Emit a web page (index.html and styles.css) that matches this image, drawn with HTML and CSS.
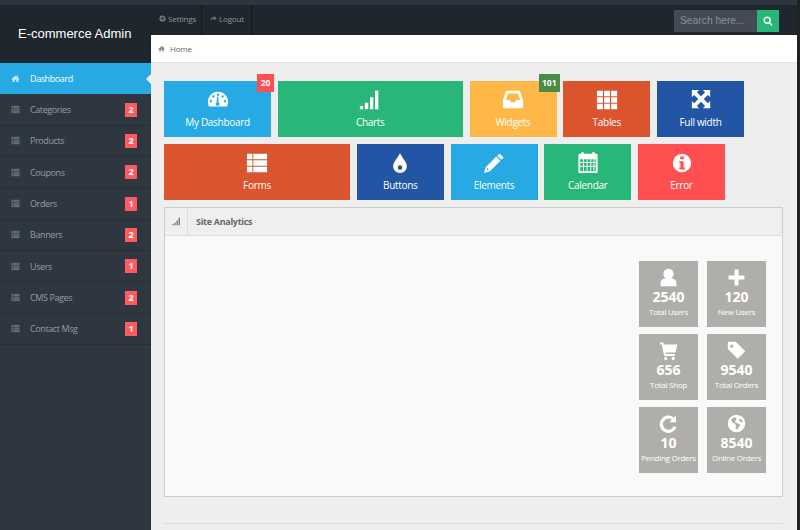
FILE: index.html
```html
<!DOCTYPE html>
<html lang="en">
<head>
  <meta charset="UTF-8">
  <meta name="viewport" content="width=device-width, initial-scale=1.0">
  <title>E-commerce Admin</title>
  <link rel="stylesheet" href="styles.css">
</head>
<body>
  <svg class="defs" aria-hidden="true">
    <symbol id="i-home" viewBox="0 0 24 24"><path d="M12 4 1 13.500l1.500 1.600L4 14v7h6v-6h4v6h6v-7l1.500 1.100 1.500-1.600L19 10V4h-3v3.400z"/></symbol>
    <symbol id="i-list" viewBox="0 0 24 24"><path d="M1 2h6v6H1zM8 2h15v6H8zM1 9h6v6H1zM8 9h15v6H8zM1 16h6v6H1zM8 16h15v6H8z"/></symbol>
    <symbol id="i-gauge" viewBox="0 0 24 24"><path fill-rule="evenodd" d="M12 3C5.400 3 1 8.400 1 14c0 2 .5 3.700 1.200 5h19.600c.7-1.300 1.200-3 1.200-5 0-5.600-4.400-11-11-11zM12 5a1.300 1.300 0 1 1 0 2.600A1.300 1.300 0 0 1 12 5zM7 6.800a1.300 1.300 0 1 1 0 2.600 1.300 1.300 0 0 1 0-2.600zM17 6.800a1.300 1.300 0 1 1 0 2.600 1.300 1.300 0 0 1 0-2.600zM4.300 12a1.300 1.300 0 1 1 0 2.600 1.300 1.300 0 0 1 0-2.600zM19.700 12a1.300 1.300 0 1 1 0 2.600 1.300 1.300 0 0 1 0-2.600zM10.900 8.500h1.300l.5 6.200a2 2 0 1 1-2.200 0z"/></symbol>
    <symbol id="i-signal" viewBox="0 0 24 24"><path d="M1 18.500h3.600V22H1zM6.500 15h3.600v7H6.500zM12 9h3.600v13H12zM17.500 2h3.600v20h-3.600z"/></symbol>
    <symbol id="i-inbox" viewBox="0 0 24 24"><path fill-rule="evenodd" d="M6 2h12a2 2 0 0 1 1.900 1.300L23 12v7a2 2 0 0 1-2 2H3a2 2 0 0 1-2-2v-7l3.100-8.700A2 2 0 0 1 6 2zM6.500 5 4.200 12h4.300l1.300 2.500h4.400l1.300-2.500h4.300L17.500 5z"/></symbol>
    <symbol id="i-grid" viewBox="0 0 24 24"><path d="M1 2h6.500v6H1zM8.800 2h6.400v6H8.800zM16.500 2H23v6h-6.500zM1 9h6.500v6H1zM8.800 9h6.400v6H8.800zM16.500 9H23v6h-6.500zM1 16h6.500v6H1zM8.800 16h6.400v6H8.800zM16.500 16H23v6h-6.500z"/></symbol>
    <symbol id="i-full" viewBox="0 0 24 24"><path d="M2 1h8L7.500 3.500 12 8l4.500-4.500L14 1h8v8l-2.500-2.500L15 11l4.500 4.500L22 13v8h-8l2.500-2.500L12 14l-4.500 4.500L10 21H2v-8l2.500 2.500L9 11 4.500 6.500 2 9z"/></symbol>
    <symbol id="i-drop" viewBox="0 0 24 24"><path fill-rule="evenodd" d="M12 1c1 3.500 7.500 9.500 7.500 14.500a7.500 7.500 0 0 1-15 0C4.500 10.500 11 4.500 12 1zM12 14.500a2.500 2.500 0 1 0 0 5 2.500 2.500 0 0 0 0-5z"/></symbol>
    <symbol id="i-pencil" viewBox="0 0 24 24"><path fill-rule="evenodd" d="M18 1.500 22.500 6 20 8.500 15.500 4zM14.500 5 19 9.500 7.500 21 1 23l2-6.500zM4.500 17.500 3.800 20.200 6.500 19.500z"/></symbol>
    <symbol id="i-cal" viewBox="0 0 24 24"><path fill-rule="evenodd" d="M6 0a1.500 1.500 0 0 1 1.500 1.500V2h9v-.5a1.500 1.500 0 0 1 3 0V2H21a1.500 1.500 0 0 1 1.500 1.500v18A1.500 1.500 0 0 1 21 23H3a1.500 1.500 0 0 1-1.500-1.500v-18A1.500 1.500 0 0 1 3 2h1.500v-.5A1.500 1.500 0 0 1 6 0zM3.500 8v3h3V8zM7.500 8v3h3V8zM11.500 8v3h3V8zM15.500 8v3h2.500V8zM19 8v3h1.500V8zM3.500 12v3h3v-3zM7.500 12v3h3v-3zM11.500 12v3h3v-3zM15.500 12v3h2.500v-3zM19 12v3h1.500v-3zM3.500 16v5h3v-5zM7.500 16v5h3v-5zM11.500 16v5h3v-5zM15.500 16v5h2.500v-5zM19 16v5h1.500v-5z"/></symbol>
    <symbol id="i-info" viewBox="0 0 24 24"><path fill-rule="evenodd" d="M12 2a10 10 0 1 1 0 20 10 10 0 0 1 0-20zM10 5v3h4V5zM9 10v2h1.300v5H9v2h6v-2h-1.300v-7z"/></symbol>
    <symbol id="i-user" viewBox="0 0 24 24"><path d="M12 1a6.500 6.500 0 0 1 6.500 6.500c0 2.500-1.300 4.500-3 5.500 4 .7 6.500 2.500 6.500 5.500V23H2v-4.500c0-3 2.500-4.800 6.500-5.500-1.700-1-3-3-3-5.500A6.500 6.500 0 0 1 12 1z"/></symbol>
    <symbol id="i-plus" viewBox="0 0 24 24"><path d="M9.500 2h5v7.500H22v5h-7.500V22h-5v-7.500H2v-5h7.500z"/></symbol>
    <symbol id="i-cart" viewBox="0 0 24 24"><path d="M1 2h4.500l.7 2.500H23l-2 10H8.500l.4 2H20v2.500H6.500L3.500 4.500H1zM8.500 20a2 2 0 1 1 0 4 2 2 0 0 1 0-4zM18 20a2 2 0 1 1 0 4 2 2 0 0 1 0-4z"/></symbol>
    <symbol id="i-tag" viewBox="0 0 24 24"><path fill-rule="evenodd" d="M2 1h9l12 12-9.500 9.500L1 10V2zM6 4.500a2 2 0 1 0 0 4 2 2 0 0 0 0-4z"/></symbol>
    <symbol id="i-refresh" viewBox="0 0 24 24"><path d="M21.500 2v8.500H13l3.300-3.300A7 7 0 1 0 18.700 15l3.500 1.700A11 11 0 1 1 19 4.500z"/></symbol>
    <symbol id="i-globe" viewBox="0 0 24 24"><path fill-rule="evenodd" d="M12 1a11 11 0 1 1 0 22 11 11 0 0 1 0-22zM7 5 5 8l2 3 3 1 1.500 3-1 3 2.500 2 2-4 2-2-3-2-3-1-1-2 2-2-1-3zM17 6l-2 1 2 3 3 .5C20 8.500 18.500 7 17 6z"/></symbol>
    <symbol id="i-cog" viewBox="0 0 24 24"><path fill-rule="evenodd" d="M10 1h4l.5 3 2 .8 2.500-1.800 2.800 2.800-1.800 2.500.8 2 3 .5v4l-3 .5-.8 2 1.800 2.500-2.800 2.800-2.500-1.800-2 .8-.5 3h-4l-.5-3-2-.8L5 22 2.200 19.200l1.800-2.500-.8-2-3-.5v-4l3-.5.8-2L2.200 4.800 5 2l2.500 1.800 2-.8zM12 8a4 4 0 1 0 0 8 4 4 0 0 0 0-8z"/></symbol>
    <symbol id="i-share" viewBox="0 0 24 24"><path d="M14 3l9 8-9 8v-5c-6 0-9 1.500-12 6 0-7 4-12 12-13z"/></symbol>
    <symbol id="i-search" viewBox="0 0 24 24"><path fill-rule="evenodd" d="M10 1a9 9 0 0 1 7.200 14.400L23 21l-2.500 2.500-5.800-5.800A9 9 0 1 1 10 1zM10 4.500a5.500 5.500 0 1 0 0 11 5.500 5.500 0 0 0 0-11z"/></symbol>
  </svg>

  <div class="page">
    <aside class="sidebar">
      <div class="logo"><h1>E-commerce Admin</h1></div>
      <ul class="nav">
        <li class="active"><svg class="nav-icon"><use href="#i-home"/></svg>Dashboard</li>
        <li><svg class="nav-icon"><use href="#i-list"/></svg>Categories<span class="count">2</span></li>
        <li><svg class="nav-icon"><use href="#i-list"/></svg>Products<span class="count">2</span></li>
        <li><svg class="nav-icon"><use href="#i-list"/></svg>Coupons<span class="count">2</span></li>
        <li><svg class="nav-icon"><use href="#i-list"/></svg>Orders<span class="count">1</span></li>
        <li><svg class="nav-icon"><use href="#i-list"/></svg>Banners<span class="count">2</span></li>
        <li><svg class="nav-icon"><use href="#i-list"/></svg>Users<span class="count">1</span></li>
        <li><svg class="nav-icon"><use href="#i-list"/></svg>CMS Pages<span class="count">2</span></li>
        <li><svg class="nav-icon"><use href="#i-list"/></svg>Contact Msg<span class="count">1</span></li>
      </ul>
    </aside>

    <div class="main">
      <div class="topbar">
        <a class="top-link"><svg class="top-icon"><use href="#i-cog"/></svg>Settings</a>
        <a class="top-link"><svg class="top-icon"><use href="#i-share"/></svg>Logout</a>
        <div class="search">
          <span class="search-input">Search here...</span>
          <span class="search-btn"><svg class="search-icon"><use href="#i-search"/></svg></span>
        </div>
      </div>
      <div class="breadcrumb"><svg class="crumb-icon"><use href="#i-home"/></svg>Home</div>

      <div class="content">
        <div class="tile-row">
          <div class="tile blue w-md"><svg class="tile-icon"><use href="#i-gauge"/></svg>My Dashboard<span class="badge red">20</span></div>
          <div class="tile green w-lg"><svg class="tile-icon"><use href="#i-signal"/></svg>Charts</div>
          <div class="tile orange w-sm"><svg class="tile-icon"><use href="#i-inbox"/></svg>Widgets<span class="badge dark-green">101</span></div>
          <div class="tile rust w-sm"><svg class="tile-icon"><use href="#i-grid"/></svg>Tables</div>
          <div class="tile navy w-sm"><svg class="tile-icon"><use href="#i-full"/></svg>Full width</div>
        </div>
        <div class="tile-row">
          <div class="tile rust w-xl"><svg class="tile-icon"><use href="#i-list"/></svg>Forms</div>
          <div class="tile navy w-sm"><svg class="tile-icon"><use href="#i-drop"/></svg>Buttons</div>
          <div class="tile blue w-sm"><svg class="tile-icon"><use href="#i-pencil"/></svg>Elements</div>
          <div class="tile green w-sm"><svg class="tile-icon"><use href="#i-cal"/></svg>Calendar</div>
          <div class="tile coral w-sm"><svg class="tile-icon"><use href="#i-info"/></svg>Error</div>
        </div>

        <div class="panel">
          <div class="panel-head">
            <span class="panel-icon"><svg><use href="#i-signal"/></svg></span>
            <h2>Site Analytics</h2>
          </div>
          <div class="panel-body">
            <div class="stats">
              <div class="stat"><svg class="stat-icon"><use href="#i-user"/></svg><strong>2540</strong><small>Total Users</small></div>
              <div class="stat"><svg class="stat-icon"><use href="#i-plus"/></svg><strong>120</strong><small>New Users</small></div>
              <div class="stat"><svg class="stat-icon"><use href="#i-cart"/></svg><strong>656</strong><small>Total Shop</small></div>
              <div class="stat"><svg class="stat-icon"><use href="#i-tag"/></svg><strong>9540</strong><small>Total Orders</small></div>
              <div class="stat"><svg class="stat-icon"><use href="#i-refresh"/></svg><strong>10</strong><small>Pending Orders</small></div>
              <div class="stat"><svg class="stat-icon"><use href="#i-globe"/></svg><strong>8540</strong><small>Online Orders</small></div>
            </div>
          </div>
        </div>
        <div class="footer-line"></div>
      </div>
    </div>
  </div>
</body>
</html>
```

FILE: styles.css
```css
html,
body {
  height: 100%;
}

body {
  font-family: 'Open Sans', sans-serif;
  background-color: #222;
  margin: 0;
  padding: 0;
  overflow: hidden;
}

.defs {
  display: none;
}

.page {
  display: flex;
  width: 797px;
  height: 530px;
  padding-top: 5px;
  box-sizing: border-box;
  background-color: #2e363f;
  overflow: hidden;
}

/* sidebar */
.sidebar {
  width: 151px;
  flex: none;
}

.logo {
  height: 58px;
  background-color: #1f262d;
  display: flex;
  align-items: center;
  padding: 0 0 2px 18px;
  box-sizing: border-box;
}

.logo h1 {
  margin: 0;
  font-family: 'Liberation Sans', Arial, sans-serif;
  font-size: 13px;
  font-weight: normal;
  color: #fff;
}

.nav {
  list-style: none;
  margin: 0;
  padding: 0;
}

.nav li {
  position: relative;
  display: flex;
  align-items: center;
  height: 31.350px;
  padding-left: 11px;
  box-sizing: border-box;
  border-bottom: 1px solid #272e36;
  font-size: 9px;
  letter-spacing: -.4px;
  color: #939da8;
}

.nav li.active {
  background-color: #27a9e3;
  color: #fff;
  border-bottom: 0;
}

.nav li.active::after {
  content: "";
  position: absolute;
  right: 0;
  top: 11px;
  border: 5px solid transparent;
  border-right-color: #eee;
  border-left: 0;
}

.nav-icon {
  width: 9px;
  height: 9px;
  margin-right: 10px;
  fill: #5f6a75;
}

.active .nav-icon {
  fill: #bfe6f8;
}

.count {
  margin-left: auto;
  margin-right: 14px;
  width: 12px;
  height: 14px;
  background-color: #ff5a5f;
  color: #fff;
  font-size: 9px;
  font-weight: 700;
  letter-spacing: 0;
  line-height: 14px;
  text-align: center;
}

/* top bar */
.main {
  flex: 1;
  min-width: 0;
  display: flex;
  flex-direction: column;
  background-color: #eee;
}

.topbar {
  height: 30px;
  flex: none;
  display: flex;
  align-items: stretch;
  background-color: #1f262d;
}

.top-link {
  display: flex;
  align-items: center;
  padding: 0 5px 4px 8px;
  border-right: 1px solid #14191e;
  font-size: 8px;
  letter-spacing: -.2px;
  color: #8f979f;
}

.top-link + .top-link {
  padding-right: 7px;
}

.top-icon {
  width: 7px;
  height: 7px;
  margin-right: 2px;
  fill: #6d757d;
}

.search {
  margin-left: auto;
  margin-right: 18px;
  margin-top: 5px;
  display: flex;
  height: 22px;
}

.search-input {
  width: 83px;
  padding-left: 6px;
  box-sizing: border-box;
  background-color: #434a54;
  color: #8a9098;
  font-family: 'Liberation Sans', Arial, sans-serif;
  font-size: 10.300px;
  line-height: 21px;
}

.search-btn {
  width: 22px;
  background-color: #28b779;
  display: flex;
  align-items: center;
  justify-content: center;
}

.search-icon {
  width: 10px;
  height: 10px;
  fill: #fff;
}

.breadcrumb {
  height: 28px;
  flex: none;
  display: flex;
  align-items: center;
  padding-left: 7px;
  background-color: #fff;
  border-bottom: 1px solid #e4e4e4;
  box-sizing: border-box;
  font-size: 8px;
  letter-spacing: -.2px;
  color: #666;
}

.crumb-icon {
  width: 7px;
  height: 7px;
  margin-right: 5px;
  fill: #888;
}

/* tiles */
.content {
  padding: 18px 14px 0 13px;
}

.tile-row {
  display: flex;
  gap: 6.750px;
  margin-bottom: 7px;
}

.tile {
  position: relative;
  height: 56px;
  display: flex;
  flex-direction: column;
  align-items: center;
  padding-top: 8px;
  box-sizing: border-box;
  color: #fff;
  font-size: 10px;
  letter-spacing: -.3px;
  line-height: 14px;
}

.tile-icon {
  width: 22px;
  height: 22px;
  margin-bottom: 4px;
  fill: #fff;
}

.w-sm {
  width: 87px;
}

.w-md {
  width: 107px;
}

.w-lg {
  width: 185px;
}

.w-xl {
  width: 186px;
}

.blue { background-color: #27a9e3; }
.green { background-color: #28b779; }
.orange { background-color: #ffb848; }
.rust { background-color: #da542e; }
.navy { background-color: #2255a4; }
.coral { background-color: #ff4f50; }

.badge {
  position: absolute;
  top: -7px;
  right: -3px;
  padding: 0 3px;
  min-width: 11px;
  height: 18px;
  color: #fff;
  font-size: 8.500px;
  font-weight: 700;
  letter-spacing: 0;
  line-height: 18px;
  text-align: center;
}

.badge.red { background-color: #ff4f50; }
.badge.dark-green { background-color: #4a8b45; }

/* analytics panel */
.panel {
  width: 619px;
  height: 290px;
  box-sizing: border-box;
  border: 1px solid #cdcdcd;
  background-color: #f9f9f9;
}

.panel-head {
  height: 28px;
  display: flex;
  align-items: center;
  box-sizing: border-box;
  background-color: #efefef;
  border-bottom: 1px solid #dcdcdc;
}

.panel-icon {
  width: 22px;
  height: 100%;
  display: flex;
  align-items: center;
  justify-content: center;
  border-right: 1px solid #dcdcdc;
}

.panel-icon svg {
  width: 9px;
  height: 9px;
  fill: #777;
}

.panel-head h2 {
  margin: 0 0 0 8px;
  font-size: 9px;
  font-weight: 700;
  letter-spacing: -.3px;
  color: #666;
}

.panel-body {
  display: flex;
  justify-content: flex-end;
  padding: 25px 16px 0 0;
}

.stats {
  display: grid;
  grid-template-columns: 59px 59px;
  grid-auto-rows: 66px;
  gap: 7px 9px;
}

.stat {
  display: flex;
  flex-direction: column;
  align-items: center;
  padding-top: 7px;
  box-sizing: border-box;
  background-color: #b0aeab;
  color: #fff;
}

.stat-icon {
  width: 19px;
  height: 19px;
  margin-bottom: 1px;
  fill: #fff;
}

.stat strong {
  font-size: 14px;
  line-height: 18px;
}

.stat small {
  font-size: 8px;
  letter-spacing: -.27px;
  line-height: 12px;
  white-space: nowrap;
}

.footer-line {
  width: 619px;
  height: 1px;
  margin-top: 26px;
  background-color: #dcdcdc;
}
```
